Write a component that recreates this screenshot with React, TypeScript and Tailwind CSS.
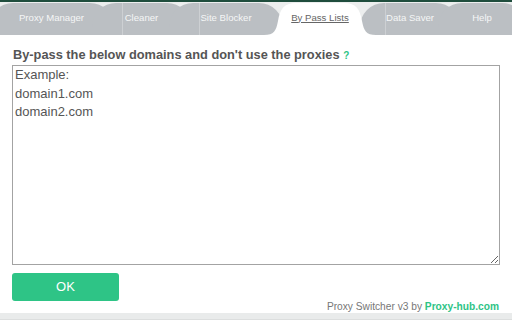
import React from "react";

type Tab = { label: string; width: string; shift: string; sep?: string };

const tabs: Tab[] = [
  { label: "Proxy Manager", width: "w-[125px]", shift: "ml-[-11px]" },
  { label: "Cleaner", width: "w-[99px]", shift: "ml-[-22px]", sep: "left-[30px]" },
  { label: "Site Blocker", width: "w-[114px]", shift: "ml-[-22px]", sep: "left-[30px]" },
];

const tabsRight: Tab[] = [
  { label: "Data Saver", width: "w-[100px]", shift: "ml-[-16px]", sep: "left-[25px]" },
  { label: "Help", width: "w-[88px]", shift: "ml-[-22px]" },
];

const GreyTab = ({ tab }: { tab: Tab }) => (
  <div
    className={`relative ${tab.width} ${tab.shift} shrink-0 h-[32px] rounded-t-[24px] bg-[#bbbfc3] flex items-center justify-center text-[9.6px] text-[#f5f6f6] pb-[2px]`}
  >
    {tab.sep && <div className={`absolute top-0 bottom-0 ${tab.sep} w-px bg-[#cdd0d3]`} />}
    <span className="relative">{tab.label}</span>
  </div>
);

const ActiveTab = () => (
  <div className="relative z-10 w-[112px] ml-[-19px] shrink-0 h-[32px] flex items-center justify-center pb-[2px]">
    <svg className="absolute inset-0" width="112" height="32" viewBox="0 0 112 32">
      <path
        d="M0 32 C10 32 12 28 14 18 C16 6 20 0 32 0 L80 0 C92 0 96 6 98 18 C100 28 102 32 112 32 Z"
        fill="#ffffff"
      />
    </svg>
    <a href="#" className="relative text-[9.6px] text-[#666] underline">
      By Pass Lists
    </a>
  </div>
);

export default function App() {
  return (
    <div
      className="w-[512px] h-[320px] bg-white overflow-hidden flex flex-col"
      style={{ fontFamily: '"Liberation Sans", Arial, sans-serif' }}
    >
      <div className="h-[2px] bg-[#1f4d3d]" />
      <div className="h-[33px] bg-[#eceeee] flex items-end overflow-hidden">
        {tabs.map((t) => (
          <GreyTab key={t.label} tab={t} />
        ))}
        <ActiveTab />
        {tabsRight.map((t) => (
          <GreyTab key={t.label} tab={t} />
        ))}
      </div>

      <div className="flex-1 flex flex-col px-[12px]">
        <h1 className="mt-[12px] h-[16px] leading-[16px] text-[12.8px] font-bold text-[#555] pl-px">
          By-pass the below domains and don't use the proxies{" "}
          <span className="text-[10px] text-[#2ec486]">?</span>
        </h1>
        <textarea
          className="mt-[2px] w-[488px] h-[200px] shrink-0 border border-[#a3a3a3] px-[2px] pt-0 pb-[2px] text-[13px] leading-[18.5px] text-[#555] outline-none"
          defaultValue={"Example:\ndomain1.com\ndomain2.com"}
          style={{ fontFamily: '"Liberation Sans", Arial, sans-serif' }}
        />
        <button className="mt-[8px] w-[107px] h-[28px] rounded-[3px] bg-[#2ec486] text-white text-[13px]">
          OK
        </button>
        <div className="h-[12px] leading-[12px] flex justify-end pr-[1px] text-[10.2px] text-[#777]">
          <span>
            Proxy Switcher v3 by{" "}
            <a href="#" className="font-bold text-[#2ec486]">
              Proxy-hub.com
            </a>
          </span>
        </div>
      </div>
      <div className="h-[7px] bg-[#e9ebeb] border-b border-[#dcdede]" />
    </div>
  );
}
